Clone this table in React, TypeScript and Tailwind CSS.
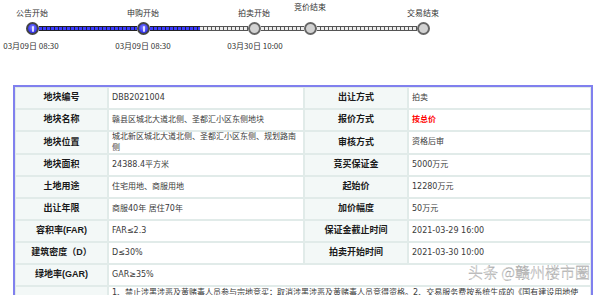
import React from "react";

const BlueBar = ({ w }: { w: string }) => (
  <div
    className={`${w} h-[5px] border-y border-[#222] bg-[repeating-linear-gradient(90deg,#3c3cff_0px,#3c3cff_3px,#1c1c44_3px,#1c1c44_4px)]`}
  />
);
const GrayBar = ({ w }: { w: string }) => (
  <div
    className={`${w} h-[5px] border-y border-[#555] bg-[repeating-linear-gradient(90deg,#ececec_0px,#ececec_3px,#555_3px,#555_4px)]`}
  />
);
const BlueNode = () => (
  <div className="w-[13px] h-[13px] shrink-0 rounded-full border-2 border-[#444] bg-[radial-gradient(circle_at_50%_40%,#8a8aff_0%,#3232f0_70%)] flex items-center justify-center">
    <div className="w-[2px] h-[6px] rounded-full bg-white/80" />
  </div>
);
const GrayNode = () => (
  <div className="w-[13px] h-[13px] shrink-0 rounded-full border-2 border-[#666] bg-[#d2d2d2]" />
);

const L = ({ children }: { children?: React.ReactNode }) => (
  <div className="bg-[#f3f8f7] min-h-[20px] flex items-center justify-center font-bold text-[9px] text-[#1a1a1a] [font-family:'Liberation_Sans','Noto_Sans_CJK_SC',sans-serif]">
    {children}
  </div>
);
const V = ({
  children,
  className = "",
}: {
  children?: React.ReactNode;
  className?: string;
}) => (
  <div
    className={`bg-white min-h-[20px] flex items-center pl-[3px] pr-[2px] text-[8px] text-[#3a3a3a] leading-[10.5px] [font-family:'DejaVu_Sans','Noto_Sans_CJK_SC',sans-serif] ${className}`}
  >
    {children}
  </div>
);

export default function App() {
  return (
    <div className="w-[600px] h-[295px] bg-white overflow-hidden relative">
      {/* timeline */}
      <div className="[font-family:'Noto_Sans_CJK_SC',sans-serif] text-[8px] leading-[10px] text-[#333]">
        <div className="flex items-end h-[18px]">
          <div className="w-[50px] ml-[7px] text-center">公告开始</div>
          <div className="w-[50px] ml-[61px] text-center">申购开始</div>
          <div className="w-[50px] ml-[61px] text-center">拍卖开始</div>
          <div className="w-[50px] ml-[6px] text-center mb-[6px]">竞价结束</div>
          <div className="w-[50px] ml-[63px] text-center">交易结束</div>
        </div>
        <div className="flex items-center mt-[4px] ml-[26px] h-[13px]">
          <BlueNode />
          <BlueBar w="w-[98px]" />
          <BlueNode />
          <BlueBar w="w-[50px]" />
          <GrayBar w="w-[48px]" />
          <GrayNode />
          <GrayBar w="w-[43px]" />
          <GrayNode />
          <GrayBar w="w-[100px]" />
          <GrayNode />
        </div>
        <div className="flex mt-[6px]">
          <div className="w-[60px] ml-[1px] text-center whitespace-nowrap">03月09日 08:30</div>
          <div className="w-[60px] ml-[52px] text-center whitespace-nowrap">03月09日 08:30</div>
          <div className="w-[60px] ml-[52px] text-center whitespace-nowrap">03月30日 10:00</div>
        </div>
      </div>

      {/* table */}
      <div className="ml-[13px] mt-[34px] w-[580px] border-2 border-[#8080ee] bg-[#e1ebe9] p-[1px]">
        <div className="grid grid-cols-[91px_194px_102px_181px] gap-[2px]">
          <L>地块编号</L>
          <V>DBB2021004</V>
          <L>出让方式</L>
          <V>拍卖</V>

          <L>地块名称</L>
          <V>赣县区城北大道北侧、圣都汇小区东侧地块</V>
          <L>报价方式</L>
          <V className="!text-[#ff0000] font-bold">按总价</V>

          <L>地块位置</L>
          <V className="min-h-[21px]">城北新区城北大道北侧、圣都汇小区东侧、规划路南侧</V>
          <L>审核方式</L>
          <V>资格后审</V>

          <L>地块面积</L>
          <V>24388.4平方米</V>
          <L>竞买保证金</L>
          <V>5000万元</V>

          <L>土地用途</L>
          <V>住宅用地、商服用地</V>
          <L>起始价</L>
          <V>12280万元</V>

          <L>出让年限</L>
          <V>商服40年 居住70年</V>
          <L>加价幅度</L>
          <V>50万元</V>

          <L>容积率(FAR)</L>
          <V>FAR≤2.3</V>
          <L>保证金截止时间</L>
          <V>2021-03-29 16:00</V>

          <L>建筑密度（D）</L>
          <V>D≤30%</V>
          <L>拍卖开始时间</L>
          <V>2021-03-30 10:00</V>

          <L>绿地率(GAR)</L>
          <V className="col-span-3">GAR≥35%</V>

          <L></L>
          <V className="col-span-3 items-start pt-[1px] min-h-[20px]">
            1、禁止涉黑涉恶及黄赌毒人员参与宗地竞买；取消涉黑涉恶及黄赌毒人员竞得资格。2、交易服务费按系统生成的《国有建设用地使
          </V>
        </div>
      </div>

      {/* watermark */}
      <div className="absolute left-[468px] top-[261px] text-[15px] leading-[22px] whitespace-nowrap text-white [font-family:'Noto_Sans_CJK_SC',sans-serif] font-light [-webkit-text-stroke:0.3px_#888]">
        头条 @赣州楼市圈
      </div>
    </div>
  );
}
